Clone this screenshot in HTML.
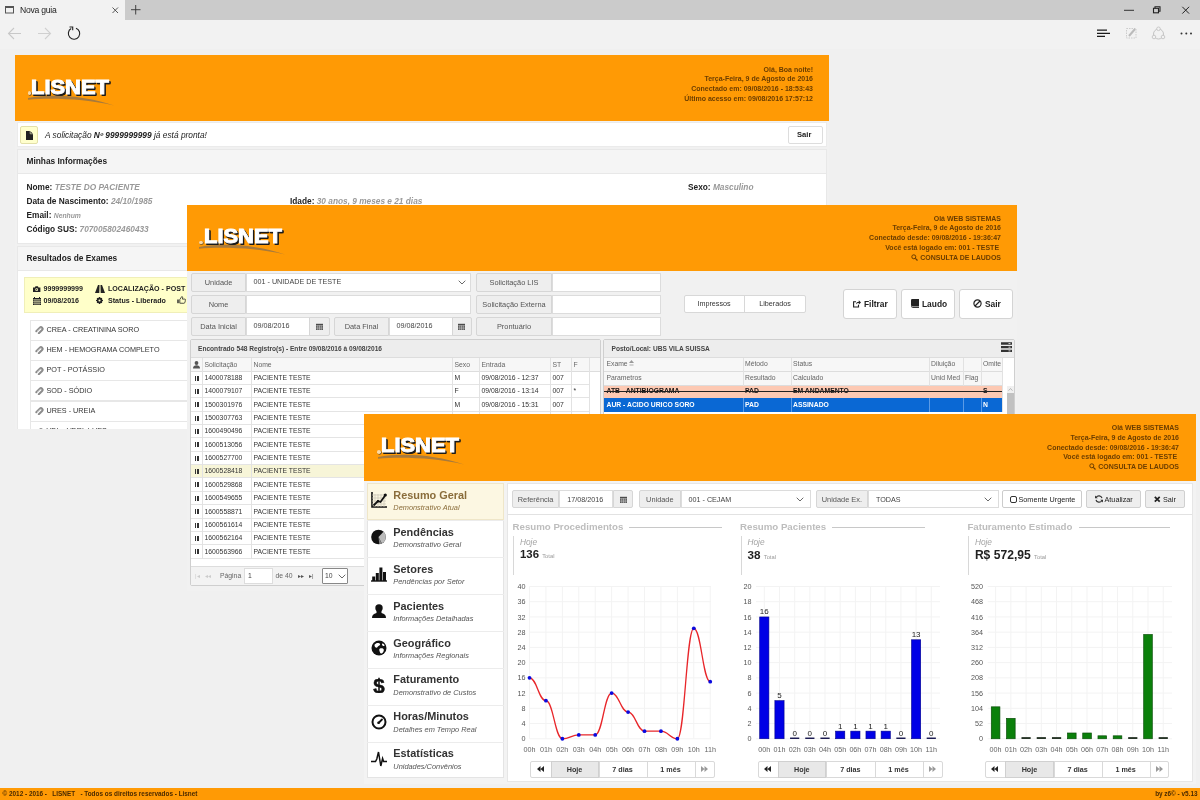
<!DOCTYPE html>
<html><head><meta charset="utf-8">
<style>
*{box-sizing:border-box;margin:0;padding:0}
html,body{width:1200px;height:800px;overflow:hidden}
body{will-change:transform;position:relative;background:#f0f0f0;font-family:"Liberation Sans",sans-serif;color:#333;font-size:8px}
.a{position:absolute}
#s1,#s2,#s3{will-change:transform}
.t{position:absolute;white-space:nowrap;line-height:1}
.b{font-weight:bold}
.i{font-style:italic}
.hdr{position:absolute;left:0;top:0;background:#ff9a05}
.logo{position:absolute;font-weight:bold;color:#fff;font-size:20.400px;line-height:1;white-space:nowrap;-webkit-text-stroke:1px #fff;text-shadow:1.300px 1.300px 0 #1a1a1a,1.800px 1.800px 0 #1a1a1a,.8px 1.600px 0 #1a1a1a,1.600px .8px 0 #1a1a1a;transform:scaleX(1.075);transform-origin:0 0}
.sw{position:absolute}
.hr{position:absolute;text-align:right;white-space:nowrap;font-weight:bold;color:#6b3d00;font-size:7px;line-height:1}
.sh{box-shadow:0 0 2px rgba(0,0,0,.25)}
/* section placeholders */
</style></head><body>
<!-- BROWSER CHROME -->
<div class="a" id="tabbar" style="left:0;top:0;width:1200px;height:20px;background:#cbcbcb"></div>
<div class="a" id="tab" style="left:0;top:0;width:125px;height:20px;background:#f2f2f2"></div>
<div class="a" id="toolbar" style="left:0;top:20px;width:1200px;height:29px;background:#f2f2f2"></div>

<svg class="a" style="left:0;top:0" width="1200" height="49" viewBox="0 0 1200 49" fill="none">
<rect x="5.5" y="6.5" width="8" height="6.5" stroke="#555" stroke-width="1"/><rect x="5" y="6" width="9" height="2" fill="#555"/>
<path d="M112.5 7.5l5.5 5.5M118 7.5l-5.5 5.5" stroke="#444" stroke-width=".9"/>
<path d="M131 9.7h9.5M135.7 5v9.5" stroke="#333" stroke-width=".9"/>
<path d="M21 33.5H9M14 28l-5.5 5.5L14 39" stroke="#c8c8c8" stroke-width="1.1"/>
<path d="M38 33.5h12M45 28l5.500 5.500L45 39" stroke="#d0d0d0" stroke-width="1.1"/>
<path d="M71.200 28.600A5.700 5.700 0 1 0 76 28.200" stroke="#222" stroke-width="1.100"/><path d="M69.500 27h3.200v3.200" stroke="#222" stroke-width="1.100"/>
<path d="M1124 10.300h10" stroke="#333" stroke-width="1"/>
<rect x="1153.500" y="8.300" width="5" height="4.500" stroke="#222" stroke-width="1.100"/><path d="M1155 8.300V6.800h5v4.500h-1.500" stroke="#222" stroke-width="1.100"/>
<path d="M1182.300 6.800l6.800 6.800M1189.100 6.800l-6.800 6.800" stroke="#222" stroke-width="1"/>
<path d="M1097 30.100h10M1097 33.300h13M1097 36.400h8" stroke="#1a1a1a" stroke-width="1.300"/>
<path d="M1126.500 28.500h9.500v9.500h-9.500z" stroke="#ccc" stroke-width="1" stroke-dasharray="1.500 1"/><path d="M1129 36l6-7" stroke="#bbb" stroke-width="2"/>
<circle cx="1158.500" cy="34" r="5" stroke="#c4c4c4" stroke-width="1"/><circle cx="1158.500" cy="28.800" r="1.800" fill="#f2f2f2" stroke="#c4c4c4" stroke-width=".9"/><circle cx="1154" cy="37" r="1.800" fill="#f2f2f2" stroke="#c4c4c4" stroke-width=".9"/><circle cx="1163" cy="37" r="1.800" fill="#f2f2f2" stroke="#c4c4c4" stroke-width=".9"/>
<circle cx="1181.500" cy="33.600" r="1" fill="#333"/><circle cx="1186.300" cy="33.600" r="1" fill="#333"/><circle cx="1191" cy="33.600" r="1" fill="#333"/>
</svg>
<div class="t" style="left:20px;top:5.500px;font-size:8.600px;letter-spacing:-.25px;color:#222">Nova guia</div>

<!-- SCREENSHOT 1 -->
<div class="a" id="s1" style="left:15px;top:55px;width:814px;height:374px;overflow:hidden;background:#f1f1f1">

<div class="hdr" style="width:814px;height:66px"></div>
<div class="logo" style="left:16.200px;top:22.200px">LISNET</div>
<div class="a" style="left:12.500px;top:36px;width:3.500px;height:3.500px;border-radius:50%;background:#ffd9a0;box-shadow:.5px .5px 0 #333"></div>
<svg class="sw" style="left:11px;top:39px" width="100" height="14" viewBox="0 0 100 14"><path d="M2 4C25 -.5 60 1.500 88 11.500C60 5 25 3.700 2 5.800z" fill="#a87a3c"/></svg>
<div class="hr" style="right:16px;top:9.500px;line-height:9.800px">Olá, Boa noite!<br>Terça-Feira, 9 de Agosto de 2016<br>Conectado em: 09/08/2016 - 18:53:43<br>Último acesso em: 09/08/2016 17:57:12</div>
<div class="a" style="left:2px;top:67px;width:810px;height:25px;background:#fff;border:1px solid #ebebeb"></div>
<div class="a" style="left:5px;top:71px;width:18px;height:18px;background:#ffffcc;border:1px solid #e3e0a8;border-radius:2px"></div>
<svg class="a" style="left:10.500px;top:75.500px" width="7" height="9" viewBox="0 0 7 9"><path d="M0 0h4.200L7 2.800V9H0z" fill="#222"/><path d="M4.200 0v2.800H7" fill="none" stroke="#ffffcc" stroke-width=".6"/></svg>
<div class="t i" style="left:30px;top:76.200px;font-size:8.350px;color:#222">A solicitação <b>Nº 9999999999</b> já está pronta!</div>
<div class="a" style="left:773px;top:71px;width:35px;height:18px;background:#fff;border:1px solid #ddd;border-radius:2px"></div>
<div class="t b" style="left:782px;top:76px;font-size:7.600px;color:#222">Sair</div>
<!-- panel 1 -->
<div class="a" style="left:2px;top:94px;width:810px;height:95px;background:#fff;border:1px solid #e8e8e8"></div>
<div class="a" style="left:2px;top:94px;width:810px;height:25px;background:#f5f5f5;border:1px solid #e8e8e8"></div>
<div class="t b" style="left:11.500px;top:102px;font-size:8.330px;color:#222">Minhas Informações</div>
<div class="t b" style="left:11.500px;top:128px;font-size:8.300px;color:#222">Nome: <i style="color:#999">TESTE DO PACIENTE</i></div>
<div class="t b" style="left:11.500px;top:142px;font-size:8.300px;color:#222">Data de Nascimento: <i style="color:#999">24/10/1985</i></div>
<div class="t b" style="left:11.500px;top:156px;font-size:8.300px;color:#222">Email: <i style="color:#999;font-size:6.800px">Nenhum</i></div>
<div class="t b" style="left:11.500px;top:170px;font-size:8.300px;color:#222">Código SUS: <i style="color:#999">707005802460433</i></div>
<div class="t b" style="left:275px;top:142px;font-size:8.300px;color:#222">Idade: <i style="color:#999">30 anos, 9 meses e 21 dias</i></div>
<div class="t b" style="left:673px;top:128px;font-size:8.300px;color:#222">Sexo: <i style="color:#999">Masculino</i></div>
<!-- panel 2 -->
<div class="a" style="left:2px;top:191px;width:810px;height:190px;background:#fff;border:1px solid #e8e8e8"></div>
<div class="a" style="left:2px;top:191px;width:810px;height:25px;background:#f5f5f5;border:1px solid #e8e8e8"></div>
<div class="t b" style="left:11.500px;top:199px;font-size:8.330px;color:#222">Resultados de Exames</div>
<div class="a" style="left:8.500px;top:222px;width:720px;height:35.500px;background:#ffffc9;border:1px solid #f0efb8"></div>
<svg class="a" style="left:18.300px;top:230.500px" width="7.400" height="6.500" viewBox="0 0 8 7"><path d="M0 1.500h2l.7-1.300h2.600L6 1.500h2V7H0z" fill="#222"/><circle cx="4" cy="4" r="1.500" fill="#ffffc9"/><circle cx="4" cy="4" r=".7" fill="#222"/></svg>
<div class="t b" style="left:28.500px;top:230.800px;font-size:7.100px;color:#222">9999999999</div>
<svg class="a" style="left:80px;top:229.500px" width="10" height="8" viewBox="0 0 10 8"><path d="M3 0h1.500L4.300 8H0zM5.500 0H7l3 8H5.700z" fill="#222"/></svg>
<div class="t b" style="left:93px;top:230.800px;font-size:7.100px;color:#222">LOCALIZAÇÃO - POST</div>
<svg class="a" style="left:18px;top:241.500px" width="8" height="8" viewBox="0 0 8 8"><path d="M0 1h8v7H0z" fill="#222"/><path d="M0 2.800h8M0 4.600h8M0 6.300h8M2 2v6M4 2v6M6 2v6" stroke="#ffffc9" stroke-width=".5"/><path d="M1.500 0v1.500M6.500 0v1.500" stroke="#222" stroke-width="1"/></svg>
<div class="t b" style="left:28.500px;top:243.200px;font-size:7.100px;color:#222">09/08/2016</div>
<svg class="a" style="left:81px;top:242px" width="7" height="7" viewBox="0 0 8 8"><circle cx="4" cy="4" r="2.400" fill="none" stroke="#222" stroke-width="1.800"/><path d="M4 0v8M0 4h8M1.200 1.200l5.600 5.600M6.800 1.200L1.200 6.800" stroke="#222" stroke-width="1.300"/><circle cx="4" cy="4" r="1.200" fill="#ffffc9"/></svg>
<div class="t b" style="left:93px;top:243.200px;font-size:7.100px;color:#222">Status - Liberado</div>
<svg class="a" style="left:161.500px;top:241px" width="9" height="8" viewBox="0 0 9 8"><path d="M2.800 7.200V3.500l2-3c1 .2 1 1 .6 2.600h2.400c.8 0 .9.900.5 1.300.4.400.3 1-.2 1.200.2.500 0 .9-.5 1 0 .500-.3.700-.8.700z" fill="none" stroke="#222" stroke-width=".8"/><rect x=".3" y="3.500" width="1.400" height="3.700" fill="#222"/></svg>
<div class="a" style="left:15px;top:264.5px;width:700px;height:21px;border:1px solid #e7e7e7;background:#fff"></div><svg class="a" style="left:20px;top:271.0px" width="9" height="8" viewBox="0 0 9 8"><path d="M1.300 5.200L4.800 1.700a1.600 1.600 0 0 1 2.300 2.300L3.800 7.200" fill="none" stroke="#8c8c8c" stroke-width="2" stroke-linecap="round"/><path d="M2 5.500L5.500 2.200" stroke="#fff" stroke-width=".6" fill="none"/></svg><div class="t" style="left:31.500px;top:270.8px;font-size:7.250px;color:#333">CREA - CREATININA SORO</div><div class="a" style="left:15px;top:284.8px;width:700px;height:21px;border:1px solid #e7e7e7;background:#fff"></div><svg class="a" style="left:20px;top:291.3px" width="9" height="8" viewBox="0 0 9 8"><path d="M1.300 5.200L4.800 1.700a1.600 1.600 0 0 1 2.300 2.300L3.800 7.200" fill="none" stroke="#8c8c8c" stroke-width="2" stroke-linecap="round"/><path d="M2 5.500L5.500 2.200" stroke="#fff" stroke-width=".6" fill="none"/></svg><div class="t" style="left:31.500px;top:291.1px;font-size:7.250px;color:#333">HEM - HEMOGRAMA COMPLETO</div><div class="a" style="left:15px;top:305.1px;width:700px;height:21px;border:1px solid #e7e7e7;background:#fff"></div><svg class="a" style="left:20px;top:311.6px" width="9" height="8" viewBox="0 0 9 8"><path d="M1.300 5.200L4.800 1.700a1.600 1.600 0 0 1 2.300 2.300L3.800 7.200" fill="none" stroke="#8c8c8c" stroke-width="2" stroke-linecap="round"/><path d="M2 5.500L5.500 2.200" stroke="#fff" stroke-width=".6" fill="none"/></svg><div class="t" style="left:31.500px;top:311.4px;font-size:7.250px;color:#333">POT - POTÁSSIO</div><div class="a" style="left:15px;top:325.4px;width:700px;height:21px;border:1px solid #e7e7e7;background:#fff"></div><svg class="a" style="left:20px;top:331.9px" width="9" height="8" viewBox="0 0 9 8"><path d="M1.300 5.200L4.800 1.700a1.600 1.600 0 0 1 2.300 2.300L3.800 7.200" fill="none" stroke="#8c8c8c" stroke-width="2" stroke-linecap="round"/><path d="M2 5.500L5.500 2.200" stroke="#fff" stroke-width=".6" fill="none"/></svg><div class="t" style="left:31.500px;top:331.7px;font-size:7.250px;color:#333">SOD - SÓDIO</div><div class="a" style="left:15px;top:345.7px;width:700px;height:21px;border:1px solid #e7e7e7;background:#fff"></div><svg class="a" style="left:20px;top:352.2px" width="9" height="8" viewBox="0 0 9 8"><path d="M1.300 5.200L4.800 1.700a1.600 1.600 0 0 1 2.300 2.300L3.800 7.200" fill="none" stroke="#8c8c8c" stroke-width="2" stroke-linecap="round"/><path d="M2 5.500L5.500 2.200" stroke="#fff" stroke-width=".6" fill="none"/></svg><div class="t" style="left:31.500px;top:352.0px;font-size:7.250px;color:#333">URES - UREIA</div><div class="a" style="left:15px;top:366.0px;width:700px;height:21px;border:1px solid #e7e7e7;background:#fff"></div><svg class="a" style="left:20px;top:372.5px" width="9" height="8" viewBox="0 0 9 8"><path d="M1.300 5.200L4.800 1.700a1.600 1.600 0 0 1 2.300 2.300L3.800 7.200" fill="none" stroke="#8c8c8c" stroke-width="2" stroke-linecap="round"/><path d="M2 5.500L5.500 2.200" stroke="#fff" stroke-width=".6" fill="none"/></svg><div class="t" style="left:31.500px;top:372.3px;font-size:7.250px;color:#333">VDL - VDRL LUES</div>

</div>
<!-- SCREENSHOT 2 -->
<div class="a" id="s2" style="left:187px;top:205px;width:830px;height:386px;overflow:hidden;background:#f1f1f1">
<div class="hdr" style="width:830px;height:66px"></div><div class="logo" style="left:16.500px;top:21.300px">LISNET</div><div class="a" style="left:12px;top:35.800px;width:3.500px;height:3.500px;border-radius:50%;background:#ffd9a0;box-shadow:.5px .5px 0 #333"></div><svg class="sw" style="left:10px;top:37.800px" width="100" height="14" viewBox="0 0 100 14"><path d="M2 4C25 -.5 60 1.500 88 11.500C60 5 25 3.700 2 5.800z" fill="#a87a3c"/></svg><div class="hr" style="right:16px;top:8.500px;line-height:9.800px">Olá WEB SISTEMAS<br>Terça-Feira, 9 de Agosto de 2016<br>Conectado desde: 09/08/2016 - 19:36:47<br>Você está logado em: 001 - TESTE&nbsp;<br><svg width="7" height="7" viewBox="0 0 7 7" style="vertical-align:-1px"><circle cx="2.800" cy="2.800" r="2" fill="none" stroke="#6b3d00" stroke-width="1"/><path d="M4.300 4.300L6.500 6.500" stroke="#6b3d00" stroke-width="1.200"/></svg> CONSULTA DE LAUDOS</div><div class="a" style="left:4px;top:68px;width:55px;height:18.5px;background:#eee;border:1px solid #d6d6d6;border-radius:2px 0 0 2px"></div><div class="t" style="left:4px;width:55px;text-align:center;top:73.8px;font-size:7.4px;color:#555">Unidade</div><div class="a" style="left:58.5px;top:68px;width:225.5px;height:18.5px;background:#fff;border:1px solid #dcdcdc"></div><div class="t" style="left:66.5px;top:73.4px;font-size:7.2px;color:#444">001 - UNIDADE DE TESTE</div><svg class="a" style="left:271px;top:75px" width="8" height="5" viewBox="0 0 8 5"><path d="M.7.700L4 4l3.300-3.300" fill="none" stroke="#6a6a6a" stroke-width="1"/></svg><div class="a" style="left:4px;top:90px;width:55px;height:18.5px;background:#eee;border:1px solid #d6d6d6;border-radius:2px 0 0 2px"></div><div class="t" style="left:4px;width:55px;text-align:center;top:95.8px;font-size:7.4px;color:#555">Nome</div><div class="a" style="left:58.5px;top:90px;width:225.5px;height:18.5px;background:#fff;border:1px solid #dcdcdc"></div><div class="a" style="left:4px;top:112px;width:55px;height:18.5px;background:#eee;border:1px solid #d6d6d6;border-radius:2px 0 0 2px"></div><div class="t" style="left:4px;width:55px;text-align:center;top:117.8px;font-size:7.4px;color:#555">Data Inicial</div><div class="a" style="left:58.5px;top:112px;width:64px;height:18.5px;background:#fff;border:1px solid #dcdcdc"></div><div class="t" style="left:66.5px;top:117.4px;font-size:7.2px;color:#444">09/08/2016</div><div class="a" style="left:122px;top:112px;width:20.5px;height:18.5px;background:#eee;border:1px solid #d6d6d6;border-radius:0 2px 2px 0"></div><svg class="a" style="left:128.75px;top:117.55px" width="7" height="7.500" viewBox="0 0 7 7.500"><path d="M0 .8h7v6.700H0z" fill="#444"/><path d="M0 2.400h7M0 4.100h7M0 5.800h7M1.750 2.400v5M3.500 2.400v5M5.250 2.400v5" stroke="#eee" stroke-width=".45"/></svg><div class="a" style="left:147px;top:112px;width:55px;height:18.5px;background:#eee;border:1px solid #d6d6d6;border-radius:2px 0 0 2px"></div><div class="t" style="left:147px;width:55px;text-align:center;top:117.8px;font-size:7.4px;color:#555">Data Final</div><div class="a" style="left:201.5px;top:112px;width:64px;height:18.5px;background:#fff;border:1px solid #dcdcdc"></div><div class="t" style="left:209.5px;top:117.4px;font-size:7.2px;color:#444">09/08/2016</div><div class="a" style="left:265px;top:112px;width:19.5px;height:18.5px;background:#eee;border:1px solid #d6d6d6;border-radius:0 2px 2px 0"></div><svg class="a" style="left:271.25px;top:117.55px" width="7" height="7.500" viewBox="0 0 7 7.500"><path d="M0 .8h7v6.700H0z" fill="#444"/><path d="M0 2.400h7M0 4.100h7M0 5.800h7M1.750 2.400v5M3.500 2.400v5M5.250 2.400v5" stroke="#eee" stroke-width=".45"/></svg><div class="a" style="left:289px;top:68px;width:76px;height:18.5px;background:#eee;border:1px solid #d6d6d6;border-radius:2px 0 0 2px"></div><div class="t" style="left:289px;width:76px;text-align:center;top:73.8px;font-size:7.4px;color:#555">Solicitação LIS</div><div class="a" style="left:364.5px;top:68px;width:109px;height:18.5px;background:#fff;border:1px solid #dcdcdc"></div><div class="a" style="left:289px;top:90px;width:76px;height:18.5px;background:#eee;border:1px solid #d6d6d6;border-radius:2px 0 0 2px"></div><div class="t" style="left:289px;width:76px;text-align:center;top:95.8px;font-size:7.4px;color:#555">Solicitação Externa</div><div class="a" style="left:364.5px;top:90px;width:109px;height:18.5px;background:#fff;border:1px solid #dcdcdc"></div><div class="a" style="left:289px;top:112px;width:76px;height:18.5px;background:#eee;border:1px solid #d6d6d6;border-radius:2px 0 0 2px"></div><div class="t" style="left:289px;width:76px;text-align:center;top:117.8px;font-size:7.4px;color:#555">Prontuário</div><div class="a" style="left:364.5px;top:112px;width:109px;height:18.5px;background:#fff;border:1px solid #dcdcdc"></div><div class="a" style="left:497px;top:89.500px;width:121.500px;height:18.500px;background:#fff;border:1px solid #d8d8d8;border-radius:2px"></div><div class="a" style="left:557px;top:89.500px;width:1px;height:18.500px;background:#d8d8d8"></div><div class="t" style="left:497px;width:60px;text-align:center;top:95px;font-size:7.200px;color:#333">Impressos</div><div class="t" style="left:558px;width:60px;text-align:center;top:95px;font-size:7.200px;color:#333">Liberados</div><div class="a" style="left:656px;top:83.500px;width:54px;height:30px;background:#fff;border:1px solid #d4d4d4;border-radius:3px"></div><div class="a" style="left:714px;top:83.500px;width:54px;height:30px;background:#fff;border:1px solid #d4d4d4;border-radius:3px"></div><div class="a" style="left:772px;top:83.500px;width:54px;height:30px;background:#fff;border:1px solid #d4d4d4;border-radius:3px"></div><svg class="a" style="left:666px;top:94.500px" width="8" height="8" viewBox="0 0 8 8"><path d="M5.500 4.800V7H.6V1.800H3" fill="none" stroke="#222" stroke-width="1.100"/><path d="M3 4.500C3 2.500 4.500 1.800 5.800 1.800V.3L8 2.400 5.800 4.500V3.100C4.800 3.100 3.800 3.300 3 4.500z" fill="#222"/></svg><div class="t b" style="left:677px;top:94.500px;font-size:8.400px;color:#222">Filtrar</div><svg class="a" style="left:724px;top:94px" width="8" height="9" viewBox="0 0 8 9"><path d="M1.400 0H8v7.400H1.400C.6 7.400 0 6.900 0 6.100V1.300C0 .5.600 0 1.400 0z" fill="#222"/><path d="M.3 7.200c.2 1 .6 1.300 1.300 1.300H8" fill="none" stroke="#222" stroke-width=".9"/></svg><div class="t b" style="left:735px;top:94.500px;font-size:8.400px;color:#222">Laudo</div><svg class="a" style="left:786px;top:94px" width="9" height="9" viewBox="0 0 9 9"><circle cx="4.500" cy="4.500" r="3.600" fill="none" stroke="#222" stroke-width="1.200"/><path d="M2 7L7 2" stroke="#222" stroke-width="1.200"/></svg><div class="t b" style="left:798px;top:94.500px;font-size:8.400px;color:#222">Sair</div>
<div class="a" style="left:3px;top:133.500px;width:411px;height:247px;background:#fff;border:1px solid #cfcfcf;border-radius:2px"></div><div class="a" style="left:4px;top:134.500px;width:409px;height:18.500px;background:#ededed;border-bottom:1px solid #ddd"></div><div class="t b" style="left:11px;top:140.500px;font-size:6.600px;color:#444">Encontrado 548 Registro(s) - Entre 09/08/2016 à 09/08/2016</div><div class="a" style="left:4px;top:153px;width:409px;height:13.500px;background:#f7f7f7;border-bottom:1px solid #ddd"></div><div class="t" style="left:17.5px;top:156.500px;font-size:6.800px;color:#666">Solicitação</div><div class="t" style="left:66.5px;top:156.500px;font-size:6.800px;color:#666">Nome</div><div class="t" style="left:267.5px;top:156.500px;font-size:6.800px;color:#666">Sexo</div><div class="t" style="left:294.5px;top:156.500px;font-size:6.800px;color:#666">Entrada</div><div class="t" style="left:365.5px;top:156.500px;font-size:6.800px;color:#666">ST</div><div class="t" style="left:386.5px;top:156.500px;font-size:6.800px;color:#666">F</div><svg class="a" style="left:6px;top:156px" width="7" height="7.500" viewBox="0 0 7 7.500"><circle cx="3.500" cy="2" r="1.900" fill="#555"/><path d="M0 7.500C0 5 1.500 4.300 3.500 4.300S7 5 7 7.500z" fill="#555"/></svg><div class="a" style="left:4px;top:166.50px;width:398px;height:13.370px;background:#fff;border-bottom:1px solid #e4e4e4"></div><div class="a" style="left:7.500px;top:170.50px;width:1.600px;height:5px;background:#333"></div><div class="a" style="left:10px;top:170.50px;width:1.600px;height:5px;background:#333"></div><div class="t" style="left:17.500px;top:169.80px;font-size:6.800px;color:#333">1400078188</div><div class="t" style="left:66.500px;top:169.80px;font-size:6.800px;color:#333">PACIENTE TESTE</div><div class="t" style="left:267.500px;top:169.80px;font-size:6.800px;color:#333">M</div><div class="t" style="left:294.500px;top:169.80px;font-size:6.800px;color:#333">09/08/2016 - 12:37</div><div class="t" style="left:365.500px;top:169.80px;font-size:6.800px;color:#333">007</div><div class="t" style="left:386.500px;top:169.80px;font-size:6.800px;color:#333"></div><div class="a" style="left:4px;top:179.87px;width:398px;height:13.370px;background:#fff;border-bottom:1px solid #e4e4e4"></div><div class="a" style="left:7.500px;top:183.87px;width:1.600px;height:5px;background:#333"></div><div class="a" style="left:10px;top:183.87px;width:1.600px;height:5px;background:#333"></div><div class="t" style="left:17.500px;top:183.17px;font-size:6.800px;color:#333">1400079107</div><div class="t" style="left:66.500px;top:183.17px;font-size:6.800px;color:#333">PACIENTE TESTE</div><div class="t" style="left:267.500px;top:183.17px;font-size:6.800px;color:#333">F</div><div class="t" style="left:294.500px;top:183.17px;font-size:6.800px;color:#333">09/08/2016 - 13:14</div><div class="t" style="left:365.500px;top:183.17px;font-size:6.800px;color:#333">007</div><div class="t" style="left:386.500px;top:183.17px;font-size:6.800px;color:#333">*</div><div class="a" style="left:4px;top:193.24px;width:398px;height:13.370px;background:#fff;border-bottom:1px solid #e4e4e4"></div><div class="a" style="left:7.500px;top:197.24px;width:1.600px;height:5px;background:#333"></div><div class="a" style="left:10px;top:197.24px;width:1.600px;height:5px;background:#333"></div><div class="t" style="left:17.500px;top:196.54px;font-size:6.800px;color:#333">1500301976</div><div class="t" style="left:66.500px;top:196.54px;font-size:6.800px;color:#333">PACIENTE TESTE</div><div class="t" style="left:267.500px;top:196.54px;font-size:6.800px;color:#333">M</div><div class="t" style="left:294.500px;top:196.54px;font-size:6.800px;color:#333">09/08/2016 - 15:31</div><div class="t" style="left:365.500px;top:196.54px;font-size:6.800px;color:#333">007</div><div class="t" style="left:386.500px;top:196.54px;font-size:6.800px;color:#333"></div><div class="a" style="left:4px;top:206.61px;width:398px;height:13.370px;background:#fff;border-bottom:1px solid #e4e4e4"></div><div class="a" style="left:7.500px;top:210.61px;width:1.600px;height:5px;background:#333"></div><div class="a" style="left:10px;top:210.61px;width:1.600px;height:5px;background:#333"></div><div class="t" style="left:17.500px;top:209.91px;font-size:6.800px;color:#333">1500307763</div><div class="t" style="left:66.500px;top:209.91px;font-size:6.800px;color:#333">PACIENTE TESTE</div><div class="a" style="left:4px;top:219.98px;width:398px;height:13.370px;background:#fff;border-bottom:1px solid #e4e4e4"></div><div class="a" style="left:7.500px;top:223.98px;width:1.600px;height:5px;background:#333"></div><div class="a" style="left:10px;top:223.98px;width:1.600px;height:5px;background:#333"></div><div class="t" style="left:17.500px;top:223.28px;font-size:6.800px;color:#333">1600490496</div><div class="t" style="left:66.500px;top:223.28px;font-size:6.800px;color:#333">PACIENTE TESTE</div><div class="a" style="left:4px;top:233.35px;width:398px;height:13.370px;background:#fff;border-bottom:1px solid #e4e4e4"></div><div class="a" style="left:7.500px;top:237.35px;width:1.600px;height:5px;background:#333"></div><div class="a" style="left:10px;top:237.35px;width:1.600px;height:5px;background:#333"></div><div class="t" style="left:17.500px;top:236.65px;font-size:6.800px;color:#333">1600513056</div><div class="t" style="left:66.500px;top:236.65px;font-size:6.800px;color:#333">PACIENTE TESTE</div><div class="a" style="left:4px;top:246.72px;width:398px;height:13.370px;background:#fff;border-bottom:1px solid #e4e4e4"></div><div class="a" style="left:7.500px;top:250.72px;width:1.600px;height:5px;background:#333"></div><div class="a" style="left:10px;top:250.72px;width:1.600px;height:5px;background:#333"></div><div class="t" style="left:17.500px;top:250.02px;font-size:6.800px;color:#333">1600527700</div><div class="t" style="left:66.500px;top:250.02px;font-size:6.800px;color:#333">PACIENTE TESTE</div><div class="a" style="left:4px;top:260.09px;width:398px;height:13.370px;background:#f7f5d8;border-bottom:1px solid #e4e4e4"></div><div class="a" style="left:7.500px;top:264.09px;width:1.600px;height:5px;background:#333"></div><div class="a" style="left:10px;top:264.09px;width:1.600px;height:5px;background:#333"></div><div class="t" style="left:17.500px;top:263.39px;font-size:6.800px;color:#333">1600528418</div><div class="t" style="left:66.500px;top:263.39px;font-size:6.800px;color:#333">PACIENTE TESTE</div><div class="a" style="left:4px;top:273.46px;width:398px;height:13.370px;background:#fff;border-bottom:1px solid #e4e4e4"></div><div class="a" style="left:7.500px;top:277.46px;width:1.600px;height:5px;background:#333"></div><div class="a" style="left:10px;top:277.46px;width:1.600px;height:5px;background:#333"></div><div class="t" style="left:17.500px;top:276.76px;font-size:6.800px;color:#333">1600529868</div><div class="t" style="left:66.500px;top:276.76px;font-size:6.800px;color:#333">PACIENTE TESTE</div><div class="a" style="left:4px;top:286.83px;width:398px;height:13.370px;background:#fff;border-bottom:1px solid #e4e4e4"></div><div class="a" style="left:7.500px;top:290.83px;width:1.600px;height:5px;background:#333"></div><div class="a" style="left:10px;top:290.83px;width:1.600px;height:5px;background:#333"></div><div class="t" style="left:17.500px;top:290.13px;font-size:6.800px;color:#333">1600549655</div><div class="t" style="left:66.500px;top:290.13px;font-size:6.800px;color:#333">PACIENTE TESTE</div><div class="a" style="left:4px;top:300.20px;width:398px;height:13.370px;background:#fff;border-bottom:1px solid #e4e4e4"></div><div class="a" style="left:7.500px;top:304.20px;width:1.600px;height:5px;background:#333"></div><div class="a" style="left:10px;top:304.20px;width:1.600px;height:5px;background:#333"></div><div class="t" style="left:17.500px;top:303.50px;font-size:6.800px;color:#333">1600558871</div><div class="t" style="left:66.500px;top:303.50px;font-size:6.800px;color:#333">PACIENTE TESTE</div><div class="a" style="left:4px;top:313.57px;width:398px;height:13.370px;background:#fff;border-bottom:1px solid #e4e4e4"></div><div class="a" style="left:7.500px;top:317.57px;width:1.600px;height:5px;background:#333"></div><div class="a" style="left:10px;top:317.57px;width:1.600px;height:5px;background:#333"></div><div class="t" style="left:17.500px;top:316.87px;font-size:6.800px;color:#333">1600561614</div><div class="t" style="left:66.500px;top:316.87px;font-size:6.800px;color:#333">PACIENTE TESTE</div><div class="a" style="left:4px;top:326.94px;width:398px;height:13.370px;background:#fff;border-bottom:1px solid #e4e4e4"></div><div class="a" style="left:7.500px;top:330.94px;width:1.600px;height:5px;background:#333"></div><div class="a" style="left:10px;top:330.94px;width:1.600px;height:5px;background:#333"></div><div class="t" style="left:17.500px;top:330.24px;font-size:6.800px;color:#333">1600562164</div><div class="t" style="left:66.500px;top:330.24px;font-size:6.800px;color:#333">PACIENTE TESTE</div><div class="a" style="left:4px;top:340.31px;width:398px;height:13.370px;background:#fff;border-bottom:1px solid #e4e4e4"></div><div class="a" style="left:7.500px;top:344.31px;width:1.600px;height:5px;background:#333"></div><div class="a" style="left:10px;top:344.31px;width:1.600px;height:5px;background:#333"></div><div class="t" style="left:17.500px;top:343.61px;font-size:6.800px;color:#333">1600563966</div><div class="t" style="left:66.500px;top:343.61px;font-size:6.800px;color:#333">PACIENTE TESTE</div><div class="a" style="left:15px;top:153px;width:1px;height:200.7px;background:#e2e2e2"></div><div class="a" style="left:64px;top:153px;width:1px;height:200.7px;background:#e2e2e2"></div><div class="a" style="left:265px;top:153px;width:1px;height:200.7px;background:#e2e2e2"></div><div class="a" style="left:292px;top:153px;width:1px;height:200.7px;background:#e2e2e2"></div><div class="a" style="left:363px;top:153px;width:1px;height:200.7px;background:#e2e2e2"></div><div class="a" style="left:384px;top:153px;width:1px;height:200.7px;background:#e2e2e2"></div><div class="a" style="left:402px;top:153px;width:1px;height:200.7px;background:#e2e2e2"></div><div class="a" style="left:4px;top:361px;width:409px;height:19px;background:#f3f3f3;border-top:1px solid #ddd"></div><div class="t" style="left:8px;top:368.200px;font-size:6px;color:#ccc">|◂&nbsp;&nbsp;&nbsp;◂◂</div><div class="t" style="left:33px;top:367.800px;font-size:6.800px;color:#666">Página</div><div class="a" style="left:57px;top:362.500px;width:29px;height:16px;background:#fff;border:1px solid #ddd"></div><div class="t" style="left:61px;top:367.800px;font-size:6.800px;color:#444">1</div><div class="t" style="left:88.500px;top:367.800px;font-size:6.800px;color:#666">de 40</div><div class="t" style="left:111px;top:368.200px;font-size:6px;color:#555">▸▸&nbsp;&nbsp;&nbsp;▸|</div><div class="a" style="left:134.500px;top:362.500px;width:26px;height:16px;background:#fff;border:1px solid #888;border-radius:1px"></div><div class="t" style="left:138px;top:367.800px;font-size:6.800px;color:#444">10</div><svg class="a" style="left:150.5px;top:368.5px" width="8" height="5" viewBox="0 0 8 5"><path d="M.7.700L4 4l3.300-3.300" fill="none" stroke="#6a6a6a" stroke-width="1"/></svg><div class="a" style="left:416px;top:133.500px;width:412px;height:260px;background:#fff;border:1px solid #cfcfcf;border-radius:2px"></div><div class="a" style="left:417px;top:134.500px;width:410px;height:18.500px;background:#ededed;border-bottom:1px solid #ddd"></div><div class="t b" style="left:424.500px;top:140.500px;font-size:6.600px;color:#444">Posto/Local: UBS VILA SUISSA</div><svg class="a" style="left:813.500px;top:136.500px" width="11" height="11" viewBox="0 0 11 11"><path d="M0 1.500h11M0 5.200h11M0 8.900h11" stroke="#333" stroke-width="2.300"/><path d="M7.500 1.500h2M7.500 5.200h2M7.500 8.900h2" stroke="#ededed" stroke-width=".8"/></svg><div class="a" style="left:417px;top:153px;width:398px;height:27.500px;background:#f7f7f7"></div><div class="a" style="left:417px;top:166px;width:398px;height:1px;background:#ddd"></div><div class="a" style="left:417px;top:179.500px;width:398px;height:1px;background:#ddd"></div><div class="t" style="left:419.5px;top:156px;font-size:6.800px;color:#666">Exame</div><div class="t" style="left:419.5px;top:170px;font-size:6.800px;color:#666">Parametros</div><div class="a" style="left:555.5px;top:153px;width:1px;height:54px;background:#e2e2e2"></div><div class="t" style="left:558.0px;top:156px;font-size:6.800px;color:#666">Método</div><div class="t" style="left:558.0px;top:170px;font-size:6.800px;color:#666">Resultado</div><div class="a" style="left:603.5px;top:153px;width:1px;height:54px;background:#e2e2e2"></div><div class="t" style="left:606.0px;top:156px;font-size:6.800px;color:#666">Status</div><div class="t" style="left:606.0px;top:170px;font-size:6.800px;color:#666">Calculado</div><div class="a" style="left:741.5px;top:153px;width:1px;height:54px;background:#e2e2e2"></div><div class="t" style="left:744.0px;top:156px;font-size:6.800px;color:#666">Diluição</div><div class="t" style="left:744.0px;top:170px;font-size:6.800px;color:#666">Unid Med</div><div class="a" style="left:775.5px;top:153px;width:1px;height:54px;background:#e2e2e2"></div><div class="t" style="left:778.0px;top:170px;font-size:6.800px;color:#666">Flag</div><div class="a" style="left:793.5px;top:153px;width:1px;height:54px;background:#e2e2e2"></div><div class="t" style="left:796.0px;top:156px;font-size:6.800px;color:#666">Omite</div><svg class="a" style="left:441.500px;top:155px" width="5" height="6" viewBox="0 0 5 6"><path d="M2.500 0L5 3H0z" fill="#999"/><path d="M.5 5h4" stroke="#999" stroke-width=".8"/></svg><div class="a" style="left:815px;top:153px;width:1px;height:54px;background:#e2e2e2"></div><div class="a" style="left:417px;top:180.500px;width:398px;height:12.500px;background:#fdc9b3"></div><div class="t b" style="left:419.5px;top:183px;font-size:6.800px;color:#111">ATB - ANTIBIOGRAMA</div><div class="t b" style="left:558px;top:183px;font-size:6.800px;color:#111">PAD</div><div class="t b" style="left:606px;top:183px;font-size:6.800px;color:#111">EM ANDAMENTO</div><div class="t b" style="left:796px;top:183px;font-size:6.800px;color:#111">S</div><div class="a" style="left:417px;top:186.200px;width:398px;height:1px;background:#222"></div><div class="a" style="left:417px;top:193px;width:398px;height:13.500px;background:#0a68d4"></div><div class="t b" style="left:419.5px;top:196.500px;font-size:6.800px;color:#fff">AUR - ACIDO URICO SORO</div><div class="t b" style="left:558px;top:196.500px;font-size:6.800px;color:#fff">PAD</div><div class="t b" style="left:606px;top:196.500px;font-size:6.800px;color:#fff">ASSINADO</div><div class="t b" style="left:796px;top:196.500px;font-size:6.800px;color:#fff">N</div><div class="a" style="left:555.5px;top:193px;width:1px;height:13.500px;background:#5b9be6"></div><div class="a" style="left:603.5px;top:193px;width:1px;height:13.500px;background:#5b9be6"></div><div class="a" style="left:741.5px;top:193px;width:1px;height:13.500px;background:#5b9be6"></div><div class="a" style="left:775.5px;top:193px;width:1px;height:13.500px;background:#5b9be6"></div><div class="a" style="left:793.5px;top:193px;width:1px;height:13.500px;background:#5b9be6"></div><div class="a" style="left:819.500px;top:180.500px;width:7.500px;height:212px;background:#f0f0f0"></div><div class="a" style="left:820px;top:188px;width:7px;height:60px;background:#c1c1c1"></div><svg class="a" style="left:821px;top:182.500px" width="5" height="3" viewBox="0 0 5 3"><path d="M.5 2.700L2.500.5l2 2.200" fill="none" stroke="#aaa" stroke-width=".8"/></svg>
</div>
<!-- SCREENSHOT 3 -->
<div class="a" id="s3" style="left:364px;top:413px;width:831.500px;height:371px;overflow:hidden"><div class="a" style="left:0;top:1px;width:832px;height:370px;background:#f3f3f3"></div>
<div class="hdr" style="top:1px;width:832px;height:66.500px"></div><div class="logo" style="left:17.200px;top:21.900px">LISNET</div><div class="a" style="left:13px;top:37.300px;width:3.500px;height:3.500px;border-radius:50%;background:#ffd9a0;box-shadow:.5px .5px 0 #333"></div><svg class="sw" style="left:11.500px;top:40.300px" width="100" height="14" viewBox="0 0 100 14"><path d="M2 4C25 -.5 60 1.500 88 11.500C60 5 25 3.700 2 5.800z" fill="#a87a3c"/></svg><div class="hr" style="right:16.500px;top:10.100px;line-height:9.800px">Olá WEB SISTEMAS<br>Terça-Feira, 9 de Agosto de 2016<br>Conectado desde: 09/08/2016 - 19:36:47<br>Você está logado em: 001 - TESTE&nbsp;<br><svg width="7" height="7" viewBox="0 0 7 7" style="vertical-align:-1px"><circle cx="2.800" cy="2.800" r="2" fill="none" stroke="#6b3d00" stroke-width="1"/><path d="M4.300 4.300L6.500 6.500" stroke="#6b3d00" stroke-width="1.200"/></svg> CONSULTA DE LAUDOS</div><div class="a" style="left:2.5px;top:69.9px;width:137.5px;height:295.6px;background:#fff;border:1px solid #e4e4e4"></div><div class="a" style="left:2.5px;top:69.9px;width:137.5px;height:37.0px;background:#fcf7e2;border:1px solid #efe6c8"></div><svg class="a" style="left:7.3px;top:79.10px" width="16" height="16" viewBox="0 0 16 16"><path d="M1 0v15h15" fill="none" stroke="#111" stroke-width="1.600"/><path d="M4 2v13M7 2v13M10 2v13M13 2v13M1 3h14M1 6h14M1 9h14M1 12h14" stroke="#c9c3b4" stroke-width=".7"/><path d="M2.500 13.500L7 9l2.500 1L14.500 3" fill="none" stroke="#111" stroke-width="1.800"/><circle cx="14.300" cy="3" r="1.600" fill="#111"/><circle cx="7" cy="9.300" r="1.200" fill="#111"/></svg><div class="t b" style="left:29.3px;top:76.70px;font-size:10.900px;color:#8a6d3b">Resumo Geral</div><div class="t i" style="left:29.3px;top:91.20px;font-size:7.400px;color:#8a6d3b">Demonstrativo Atual</div><div class="a" style="left:2.5px;top:106.85px;width:137.5px;height:1px;background:#ececec"></div><svg class="a" style="left:7.3px;top:116.05px" width="16" height="16" viewBox="0 0 16 16"><circle cx="7.500" cy="8" r="7.300" fill="#111"/><path d="M7.500 8L12.500 2.700A7.300 7.300 0 0 1 10.800 14.500z" fill="#bbb"/><path d="M7.500 8l3.300 6.500A7.300 7.300 0 0 1 8.300 15.300z" fill="#888"/></svg><div class="t b" style="left:29.3px;top:113.65px;font-size:10.900px;color:#333">Pendências</div><div class="t i" style="left:29.3px;top:128.15px;font-size:7.400px;color:#555">Demonstrativo Geral</div><div class="a" style="left:2.5px;top:143.80px;width:137.5px;height:1px;background:#ececec"></div><svg class="a" style="left:7.3px;top:153.00px" width="16" height="16" viewBox="0 0 16 16"><path d="M0 15h16" stroke="#111" stroke-width="1.400"/><rect x="1.200" y="10.500" width="3" height="4.500" fill="#111"/><rect x="4.800" y="7" width="3" height="8" fill="#111"/><rect x="8.400" y="1.500" width="3" height="13.500" fill="#111"/><rect x="12" y="6" width="3" height="9" fill="#111"/></svg><div class="t b" style="left:29.3px;top:150.60px;font-size:10.900px;color:#333">Setores</div><div class="t i" style="left:29.3px;top:165.10px;font-size:7.400px;color:#555">Pendências por Setor</div><div class="a" style="left:2.5px;top:180.75px;width:137.5px;height:1px;background:#ececec"></div><svg class="a" style="left:7.3px;top:189.95px" width="16" height="16" viewBox="0 0 16 16"><circle cx="8" cy="5" r="3.700" fill="#111"/><path d="M5.500 7.500h5v2.500c3 .8 4.500 2 4.500 5H1c0-3 1.500-4.200 4.500-5z" fill="#111"/></svg><div class="t b" style="left:29.3px;top:187.55px;font-size:10.900px;color:#333">Pacientes</div><div class="t i" style="left:29.3px;top:202.05px;font-size:7.400px;color:#555">Informações Detalhadas</div><div class="a" style="left:2.5px;top:217.70px;width:137.5px;height:1px;background:#ececec"></div><svg class="a" style="left:7.3px;top:226.90px" width="16" height="16" viewBox="0 0 16 16"><circle cx="8" cy="8" r="7.500" fill="#111"/><path d="M5 3.500c1.500-.8 3.500-.5 4 .5s-.5 1.500-1.500 2-1 1.800-2 1.800S3.500 6.500 3.500 5.500 4 4 5 3.500zM9 8.500c1.500-.5 3.500 0 3.800 1.200s-1 3.300-2.300 3.800S8.800 12 8.500 11 8 9 9 8.500zM11.500 3.500c1 0 2 1 2 2s-1.500.5-2 0-.8-2 0-2z" fill="#fff"/></svg><div class="t b" style="left:29.3px;top:224.50px;font-size:10.900px;color:#333">Geográfico</div><div class="t i" style="left:29.3px;top:239.00px;font-size:7.400px;color:#555">Informações Regionais</div><div class="a" style="left:2.5px;top:254.65px;width:137.5px;height:1px;background:#ececec"></div><svg class="a" style="left:7.3px;top:263.85px" width="16" height="16" viewBox="0 0 16 16"><text x="8" y="15.500" text-anchor="middle" font-family="Liberation Sans" font-weight="bold" font-size="20.500" fill="#111" stroke="#111" stroke-width=".5">$</text></svg><div class="t b" style="left:29.3px;top:261.45px;font-size:10.900px;color:#333">Faturamento</div><div class="t i" style="left:29.3px;top:275.95px;font-size:7.400px;color:#555">Demonstrativo de Custos</div><div class="a" style="left:2.5px;top:291.60px;width:137.5px;height:1px;background:#ececec"></div><svg class="a" style="left:7.3px;top:300.80px" width="16" height="16" viewBox="0 0 16 16"><circle cx="8" cy="8" r="6.500" fill="none" stroke="#111" stroke-width="2"/><path d="M7.500 9L11 5.500" stroke="#111" stroke-width="1.800" stroke-linecap="round"/><circle cx="7.600" cy="8.800" r="1.300" fill="#111"/></svg><div class="t b" style="left:29.3px;top:298.40px;font-size:10.900px;color:#333">Horas/Minutos</div><div class="t i" style="left:29.3px;top:312.90px;font-size:7.400px;color:#555">Detalhes em Tempo Real</div><div class="a" style="left:2.5px;top:328.55px;width:137.5px;height:1px;background:#ececec"></div><svg class="a" style="left:7.3px;top:337.75px" width="16" height="16" viewBox="0 0 16 16"><path d="M0 10.500h4.500l1.300-2.500 1.700-7 2.300 14 1.800-7.500 1 3H16" fill="none" stroke="#111" stroke-width="1.500" stroke-linejoin="miter"/></svg><div class="t b" style="left:29.3px;top:335.35px;font-size:10.900px;color:#333">Estatísticas</div><div class="t i" style="left:29.3px;top:349.85px;font-size:7.400px;color:#555">Unidades/Convênios</div><div class="a" style="left:142.7px;top:69.9px;width:686.0px;height:299.6px;background:#fff;border:1px solid #e6e6e6"></div><div class="a" style="left:147.7px;top:77.4px;width:47.8px;height:18px;background:#eee;border:1px solid #d6d6d6;border-radius:2px 0 0 2px"></div><div class="t" style="left:147.7px;width:47.8px;text-align:center;top:83.0px;font-size:7.4px;color:#555">Referência</div><div class="a" style="left:195.2px;top:77.4px;width:54.3px;height:18px;background:#fff;border:1px solid #dcdcdc"></div><div class="t" style="left:203.2px;top:82.5px;font-size:7.2px;color:#444">17/08/2016</div><div class="a" style="left:249.2px;top:77.4px;width:20.3px;height:18px;background:#eee;border:1px solid #d6d6d6;border-radius:0 2px 2px 0"></div><svg class="a" style="left:255.84999999999997px;top:82.7px" width="7" height="7.500" viewBox="0 0 7 7.500"><path d="M0 .8h7v6.700H0z" fill="#444"/><path d="M0 2.400h7M0 4.100h7M0 5.800h7M1.750 2.400v5M3.500 2.400v5M5.250 2.400v5" stroke="#eee" stroke-width=".45"/></svg><div class="a" style="left:274.7px;top:77.4px;width:42.3px;height:18px;background:#eee;border:1px solid #d6d6d6;border-radius:2px 0 0 2px"></div><div class="t" style="left:274.7px;width:42.3px;text-align:center;top:83.0px;font-size:7.4px;color:#555">Unidade</div><div class="a" style="left:316.5px;top:77.4px;width:130.8px;height:18px;background:#fff;border:1px solid #dcdcdc"></div><div class="t" style="left:324.5px;top:82.5px;font-size:7.2px;color:#444">001 - CEJAM</div><svg class="a" style="left:431.5px;top:84.4px" width="8" height="5" viewBox="0 0 8 5"><path d="M.7.700L4 4l3.300-3.300" fill="none" stroke="#6a6a6a" stroke-width="1"/></svg><div class="a" style="left:451.5px;top:77.4px;width:52.8px;height:18px;background:#eee;border:1px solid #d6d6d6;border-radius:2px 0 0 2px"></div><div class="t" style="left:451.5px;width:52.8px;text-align:center;top:83.0px;font-size:7.4px;color:#555">Unidade Ex.</div><div class="a" style="left:504px;top:77.4px;width:130.5px;height:18px;background:#fff;border:1px solid #dcdcdc"></div><div class="t" style="left:512px;top:82.5px;font-size:7.2px;color:#444">TODAS</div><svg class="a" style="left:619.5px;top:84.4px" width="8" height="5" viewBox="0 0 8 5"><path d="M.7.700L4 4l3.300-3.300" fill="none" stroke="#6a6a6a" stroke-width="1"/></svg><div class="a" style="left:638.3px;top:77.4px;width:80px;height:18px;background:#fff;border:1px solid #ccc;border-radius:2px"></div><div class="a" style="left:645.600px;top:82.900px;width:7px;height:7px;border:1.200px solid #333;border-radius:2px"></div><div class="t" style="left:654.5px;top:82.80000000000001px;font-size:7.250px;color:#222">Somente Urgente</div><div class="a" style="left:722.4px;top:77.4px;width:54.500px;height:18px;background:#eee;border:1px solid #d0d0d0;border-radius:2px"></div><svg class="a" style="left:730.5px;top:82.4px" width="8" height="8" viewBox="0 0 8 8"><path d="M7 3.200A3.200 3.200 0 0 0 1.200 2.300M1 4.800A3.200 3.200 0 0 0 6.800 5.700" fill="none" stroke="#333" stroke-width="1.200"/><path d="M0 .5v2.800h2.800zM8 7.500V4.700H5.200z" fill="#333"/></svg><div class="t" style="left:740.5px;top:82.80000000000001px;font-size:7.250px;color:#222">Atualizar</div><div class="a" style="left:781px;top:77.4px;width:40px;height:18px;background:#eee;border:1px solid #d0d0d0;border-radius:2px"></div><svg class="a" style="left:790px;top:83.2px" width="6.500" height="6.500" viewBox="0 0 6.500 6.500"><path d="M.8.800l4.900 4.900M5.700.800L.8 5.700" stroke="#222" stroke-width="1.700"/></svg><div class="t" style="left:799px;top:82.80000000000001px;font-size:7.250px;color:#222">Sair</div><div class="a" style="left:143.7px;top:101.3px;width:684px;height:1px;background:#e2e2e2"></div>
<div class="t b" style="left:148.5px;top:109.3px;font-size:9.700px;color:#bdbdbd">Resumo Procedimentos</div><div class="a" style="left:265px;top:113.5px;width:93px;height:1.600px;background:#c8c8c8"></div><div class="a" style="left:149.3px;top:122.8px;width:1px;height:39.500px;background:#d8d8d8"></div><div class="t i" style="left:156.0px;top:125.2px;font-size:8.300px;color:#a5a5a5">Hoje</div><div class="t b" style="left:156.0px;top:135.6px;font-size:11.400px;color:#222">136 <span style="font-weight:normal;font-size:5.800px;color:#999">Total</span></div><div class="t b" style="left:376px;top:109.3px;font-size:9.700px;color:#bdbdbd">Resumo Pacientes</div><div class="a" style="left:467.5px;top:113.5px;width:93.0px;height:1.600px;background:#c8c8c8"></div><div class="a" style="left:376.8px;top:122.8px;width:1px;height:39.500px;background:#d8d8d8"></div><div class="t i" style="left:383.5px;top:125.2px;font-size:8.300px;color:#a5a5a5">Hoje</div><div class="t b" style="left:383.5px;top:135.6px;font-size:11.700px;color:#222">38 <span style="font-weight:normal;font-size:5.800px;color:#999">Total</span></div><div class="t b" style="left:603.4px;top:109.3px;font-size:9.700px;color:#bdbdbd">Faturamento Estimado</div><div class="a" style="left:715px;top:113.5px;width:91px;height:1.600px;background:#c8c8c8"></div><div class="a" style="left:604.2px;top:122.8px;width:1px;height:39.500px;background:#d8d8d8"></div><div class="t i" style="left:610.9px;top:125.2px;font-size:8.300px;color:#a5a5a5">Hoje</div><div class="t b" style="left:610.9px;top:135.6px;font-size:12.100px;color:#222">R$ 572,95 <span style="font-weight:normal;font-size:5.800px;color:#999">Total</span></div><svg class="a" style="left:0;top:0" width="832" height="371" viewBox="364 413 832 371" font-family="Liberation Sans" font-size="7.200"><path d="M529.5 738.75H711" stroke="#f3f3f3" stroke-width="1"/><path d="M529.5 723.52H711" stroke="#f3f3f3" stroke-width="1"/><path d="M529.5 708.30H711" stroke="#f3f3f3" stroke-width="1"/><path d="M529.5 693.08H711" stroke="#f3f3f3" stroke-width="1"/><path d="M529.5 677.85H711" stroke="#f3f3f3" stroke-width="1"/><path d="M529.5 662.62H711" stroke="#f3f3f3" stroke-width="1"/><path d="M529.5 647.40H711" stroke="#f3f3f3" stroke-width="1"/><path d="M529.5 632.17H711" stroke="#f3f3f3" stroke-width="1"/><path d="M529.5 616.95H711" stroke="#f3f3f3" stroke-width="1"/><path d="M529.5 601.73H711" stroke="#f3f3f3" stroke-width="1"/><path d="M529.5 586.50H711" stroke="#f3f3f3" stroke-width="1"/><path d="M529.50 586.5V738.75" stroke="#f3f3f3" stroke-width="1"/><path d="M545.93 586.5V738.75" stroke="#f3f3f3" stroke-width="1"/><path d="M562.36 586.5V738.75" stroke="#f3f3f3" stroke-width="1"/><path d="M578.79 586.5V738.75" stroke="#f3f3f3" stroke-width="1"/><path d="M595.22 586.5V738.75" stroke="#f3f3f3" stroke-width="1"/><path d="M611.65 586.5V738.75" stroke="#f3f3f3" stroke-width="1"/><path d="M628.08 586.5V738.75" stroke="#f3f3f3" stroke-width="1"/><path d="M644.51 586.5V738.75" stroke="#f3f3f3" stroke-width="1"/><path d="M660.94 586.5V738.75" stroke="#f3f3f3" stroke-width="1"/><path d="M677.37 586.5V738.75" stroke="#f3f3f3" stroke-width="1"/><path d="M693.80 586.5V738.75" stroke="#f3f3f3" stroke-width="1"/><path d="M710.23 586.5V738.75" stroke="#f3f3f3" stroke-width="1"/><text x="525.5" y="741.35" text-anchor="end" fill="#555">0</text><text x="525.5" y="726.12" text-anchor="end" fill="#555">4</text><text x="525.5" y="710.90" text-anchor="end" fill="#555">8</text><text x="525.5" y="695.68" text-anchor="end" fill="#555">12</text><text x="525.5" y="680.45" text-anchor="end" fill="#555">16</text><text x="525.5" y="665.23" text-anchor="end" fill="#555">20</text><text x="525.5" y="650.00" text-anchor="end" fill="#555">24</text><text x="525.5" y="634.77" text-anchor="end" fill="#555">28</text><text x="525.5" y="619.55" text-anchor="end" fill="#555">32</text><text x="525.5" y="604.33" text-anchor="end" fill="#555">36</text><text x="525.5" y="589.10" text-anchor="end" fill="#555">40</text><text x="529.50" y="751.500" text-anchor="middle" fill="#666">00h</text><text x="545.93" y="751.500" text-anchor="middle" fill="#666">01h</text><text x="562.36" y="751.500" text-anchor="middle" fill="#666">02h</text><text x="578.79" y="751.500" text-anchor="middle" fill="#666">03h</text><text x="595.22" y="751.500" text-anchor="middle" fill="#666">04h</text><text x="611.65" y="751.500" text-anchor="middle" fill="#666">05h</text><text x="628.08" y="751.500" text-anchor="middle" fill="#666">06h</text><text x="644.51" y="751.500" text-anchor="middle" fill="#666">07h</text><text x="660.94" y="751.500" text-anchor="middle" fill="#666">08h</text><text x="677.37" y="751.500" text-anchor="middle" fill="#666">09h</text><text x="693.80" y="751.500" text-anchor="middle" fill="#666">10h</text><text x="710.23" y="751.500" text-anchor="middle" fill="#666">11h</text><path d="M529.50 677.85C536.89 677.85 538.54 700.69 545.93 700.69C553.32 700.69 554.97 738.75 562.36 738.75C569.75 738.75 571.40 734.94 578.79 734.94C586.18 734.94 587.83 734.94 595.22 734.94C602.61 734.94 604.26 693.08 611.65 693.08C619.04 693.08 620.69 712.11 628.08 712.11C635.47 712.11 637.12 731.14 644.51 731.14C651.90 731.14 653.55 731.14 660.94 731.14C668.33 731.14 669.98 738.75 677.37 738.75C684.76 738.75 686.41 628.37 693.80 628.37C701.19 628.37 702.84 681.66 710.23 681.66" fill="none" stroke="#e8262a" stroke-width="1.300"/><circle cx="529.50" cy="677.85" r="1.900" fill="#0a0adf"/><circle cx="545.93" cy="700.69" r="1.900" fill="#0a0adf"/><circle cx="562.36" cy="738.75" r="1.900" fill="#0a0adf"/><circle cx="578.79" cy="734.94" r="1.900" fill="#0a0adf"/><circle cx="595.22" cy="734.94" r="1.900" fill="#0a0adf"/><circle cx="611.65" cy="693.08" r="1.900" fill="#0a0adf"/><circle cx="628.08" cy="712.11" r="1.900" fill="#0a0adf"/><circle cx="644.51" cy="731.14" r="1.900" fill="#0a0adf"/><circle cx="660.94" cy="731.14" r="1.900" fill="#0a0adf"/><circle cx="677.37" cy="738.75" r="1.900" fill="#0a0adf"/><circle cx="693.80" cy="628.37" r="1.900" fill="#0a0adf"/><circle cx="710.23" cy="681.66" r="1.900" fill="#0a0adf"/><path d="M756 738.75H940" stroke="#f3f3f3" stroke-width="1"/><path d="M756 723.52H940" stroke="#f3f3f3" stroke-width="1"/><path d="M756 708.30H940" stroke="#f3f3f3" stroke-width="1"/><path d="M756 693.08H940" stroke="#f3f3f3" stroke-width="1"/><path d="M756 677.85H940" stroke="#f3f3f3" stroke-width="1"/><path d="M756 662.62H940" stroke="#f3f3f3" stroke-width="1"/><path d="M756 647.40H940" stroke="#f3f3f3" stroke-width="1"/><path d="M756 632.17H940" stroke="#f3f3f3" stroke-width="1"/><path d="M756 616.95H940" stroke="#f3f3f3" stroke-width="1"/><path d="M756 601.73H940" stroke="#f3f3f3" stroke-width="1"/><path d="M756 586.50H940" stroke="#f3f3f3" stroke-width="1"/><path d="M764.30 586.5V738.75" stroke="#f3f3f3" stroke-width="1"/><path d="M779.48 586.5V738.75" stroke="#f3f3f3" stroke-width="1"/><path d="M794.66 586.5V738.75" stroke="#f3f3f3" stroke-width="1"/><path d="M809.84 586.5V738.75" stroke="#f3f3f3" stroke-width="1"/><path d="M825.02 586.5V738.75" stroke="#f3f3f3" stroke-width="1"/><path d="M840.20 586.5V738.75" stroke="#f3f3f3" stroke-width="1"/><path d="M855.38 586.5V738.75" stroke="#f3f3f3" stroke-width="1"/><path d="M870.56 586.5V738.75" stroke="#f3f3f3" stroke-width="1"/><path d="M885.74 586.5V738.75" stroke="#f3f3f3" stroke-width="1"/><path d="M900.92 586.5V738.75" stroke="#f3f3f3" stroke-width="1"/><path d="M916.10 586.5V738.75" stroke="#f3f3f3" stroke-width="1"/><path d="M931.28 586.5V738.75" stroke="#f3f3f3" stroke-width="1"/><text x="751.5" y="741.35" text-anchor="end" fill="#555">0</text><text x="751.5" y="726.12" text-anchor="end" fill="#555">2</text><text x="751.5" y="710.90" text-anchor="end" fill="#555">4</text><text x="751.5" y="695.68" text-anchor="end" fill="#555">6</text><text x="751.5" y="680.45" text-anchor="end" fill="#555">8</text><text x="751.5" y="665.23" text-anchor="end" fill="#555">10</text><text x="751.5" y="650.00" text-anchor="end" fill="#555">12</text><text x="751.5" y="634.77" text-anchor="end" fill="#555">14</text><text x="751.5" y="619.55" text-anchor="end" fill="#555">16</text><text x="751.5" y="604.33" text-anchor="end" fill="#555">18</text><text x="751.5" y="589.10" text-anchor="end" fill="#555">20</text><text x="764.30" y="751.500" text-anchor="middle" fill="#666">00h</text><text x="779.48" y="751.500" text-anchor="middle" fill="#666">01h</text><text x="794.66" y="751.500" text-anchor="middle" fill="#666">02h</text><text x="809.84" y="751.500" text-anchor="middle" fill="#666">03h</text><text x="825.02" y="751.500" text-anchor="middle" fill="#666">04h</text><text x="840.20" y="751.500" text-anchor="middle" fill="#666">05h</text><text x="855.38" y="751.500" text-anchor="middle" fill="#666">06h</text><text x="870.56" y="751.500" text-anchor="middle" fill="#666">07h</text><text x="885.74" y="751.500" text-anchor="middle" fill="#666">08h</text><text x="900.92" y="751.500" text-anchor="middle" fill="#666">09h</text><text x="916.10" y="751.500" text-anchor="middle" fill="#666">10h</text><text x="931.28" y="751.500" text-anchor="middle" fill="#666">11h</text><rect x="759.70" y="616.95" width="9.200" height="121.80" fill="#0000e6" stroke="#00008c" stroke-width=".6"/><text x="764.30" y="614.45" text-anchor="middle" fill="#222" font-size="8">16</text><rect x="774.88" y="700.69" width="9.200" height="38.06" fill="#0000e6" stroke="#00008c" stroke-width=".6"/><text x="779.48" y="698.19" text-anchor="middle" fill="#222" font-size="8">5</text><rect x="790.06" y="737.55" width="9.200" height="1.400" fill="#11114a"/><text x="794.66" y="736.25" text-anchor="middle" fill="#222" font-size="8">0</text><rect x="805.24" y="737.55" width="9.200" height="1.400" fill="#11114a"/><text x="809.84" y="736.25" text-anchor="middle" fill="#222" font-size="8">0</text><rect x="820.42" y="737.55" width="9.200" height="1.400" fill="#11114a"/><text x="825.02" y="736.25" text-anchor="middle" fill="#222" font-size="8">0</text><rect x="835.60" y="731.14" width="9.200" height="7.61" fill="#0000e6" stroke="#00008c" stroke-width=".6"/><text x="840.20" y="728.64" text-anchor="middle" fill="#222" font-size="8">1</text><rect x="850.78" y="731.14" width="9.200" height="7.61" fill="#0000e6" stroke="#00008c" stroke-width=".6"/><text x="855.38" y="728.64" text-anchor="middle" fill="#222" font-size="8">1</text><rect x="865.96" y="731.14" width="9.200" height="7.61" fill="#0000e6" stroke="#00008c" stroke-width=".6"/><text x="870.56" y="728.64" text-anchor="middle" fill="#222" font-size="8">1</text><rect x="881.14" y="731.14" width="9.200" height="7.61" fill="#0000e6" stroke="#00008c" stroke-width=".6"/><text x="885.74" y="728.64" text-anchor="middle" fill="#222" font-size="8">1</text><rect x="896.32" y="737.55" width="9.200" height="1.400" fill="#11114a"/><text x="900.92" y="736.25" text-anchor="middle" fill="#222" font-size="8">0</text><rect x="911.50" y="639.79" width="9.200" height="98.96" fill="#0000e6" stroke="#00008c" stroke-width=".6"/><text x="916.10" y="637.29" text-anchor="middle" fill="#222" font-size="8">13</text><rect x="926.68" y="737.55" width="9.200" height="1.400" fill="#11114a"/><text x="931.28" y="736.25" text-anchor="middle" fill="#222" font-size="8">0</text><path d="M987.7 738.75H1172" stroke="#f3f3f3" stroke-width="1"/><path d="M987.7 723.52H1172" stroke="#f3f3f3" stroke-width="1"/><path d="M987.7 708.30H1172" stroke="#f3f3f3" stroke-width="1"/><path d="M987.7 693.08H1172" stroke="#f3f3f3" stroke-width="1"/><path d="M987.7 677.85H1172" stroke="#f3f3f3" stroke-width="1"/><path d="M987.7 662.62H1172" stroke="#f3f3f3" stroke-width="1"/><path d="M987.7 647.40H1172" stroke="#f3f3f3" stroke-width="1"/><path d="M987.7 632.17H1172" stroke="#f3f3f3" stroke-width="1"/><path d="M987.7 616.95H1172" stroke="#f3f3f3" stroke-width="1"/><path d="M987.7 601.73H1172" stroke="#f3f3f3" stroke-width="1"/><path d="M987.7 586.50H1172" stroke="#f3f3f3" stroke-width="1"/><path d="M995.60 586.5V738.75" stroke="#f3f3f3" stroke-width="1"/><path d="M1010.84 586.5V738.75" stroke="#f3f3f3" stroke-width="1"/><path d="M1026.08 586.5V738.75" stroke="#f3f3f3" stroke-width="1"/><path d="M1041.32 586.5V738.75" stroke="#f3f3f3" stroke-width="1"/><path d="M1056.56 586.5V738.75" stroke="#f3f3f3" stroke-width="1"/><path d="M1071.80 586.5V738.75" stroke="#f3f3f3" stroke-width="1"/><path d="M1087.04 586.5V738.75" stroke="#f3f3f3" stroke-width="1"/><path d="M1102.28 586.5V738.75" stroke="#f3f3f3" stroke-width="1"/><path d="M1117.52 586.5V738.75" stroke="#f3f3f3" stroke-width="1"/><path d="M1132.76 586.5V738.75" stroke="#f3f3f3" stroke-width="1"/><path d="M1148.00 586.5V738.75" stroke="#f3f3f3" stroke-width="1"/><path d="M1163.24 586.5V738.75" stroke="#f3f3f3" stroke-width="1"/><text x="983" y="741.35" text-anchor="end" fill="#555">0</text><text x="983" y="726.12" text-anchor="end" fill="#555">52</text><text x="983" y="710.90" text-anchor="end" fill="#555">104</text><text x="983" y="695.68" text-anchor="end" fill="#555">156</text><text x="983" y="680.45" text-anchor="end" fill="#555">208</text><text x="983" y="665.23" text-anchor="end" fill="#555">260</text><text x="983" y="650.00" text-anchor="end" fill="#555">312</text><text x="983" y="634.77" text-anchor="end" fill="#555">364</text><text x="983" y="619.55" text-anchor="end" fill="#555">416</text><text x="983" y="604.33" text-anchor="end" fill="#555">468</text><text x="983" y="589.10" text-anchor="end" fill="#555">520</text><text x="995.60" y="751.500" text-anchor="middle" fill="#666">00h</text><text x="1010.84" y="751.500" text-anchor="middle" fill="#666">01h</text><text x="1026.08" y="751.500" text-anchor="middle" fill="#666">02h</text><text x="1041.32" y="751.500" text-anchor="middle" fill="#666">03h</text><text x="1056.56" y="751.500" text-anchor="middle" fill="#666">04h</text><text x="1071.80" y="751.500" text-anchor="middle" fill="#666">05h</text><text x="1087.04" y="751.500" text-anchor="middle" fill="#666">06h</text><text x="1102.28" y="751.500" text-anchor="middle" fill="#666">07h</text><text x="1117.52" y="751.500" text-anchor="middle" fill="#666">08h</text><text x="1132.76" y="751.500" text-anchor="middle" fill="#666">09h</text><text x="1148.00" y="751.500" text-anchor="middle" fill="#666">10h</text><text x="1163.24" y="751.500" text-anchor="middle" fill="#666">11h</text><rect x="991.30" y="706.84" width="8.600" height="31.91" fill="#0b800b" stroke="#0a4f0a" stroke-width=".7"/><rect x="1006.54" y="718.37" width="8.600" height="20.38" fill="#0b800b" stroke="#0a4f0a" stroke-width=".7"/><rect x="1021.48" y="737.15" width="9.200" height="1.800" fill="#1c2a1c"/><rect x="1036.72" y="737.15" width="9.200" height="1.800" fill="#1c2a1c"/><rect x="1051.96" y="737.15" width="9.200" height="1.800" fill="#1c2a1c"/><rect x="1067.50" y="733.01" width="8.600" height="5.74" fill="#0b800b" stroke="#0a4f0a" stroke-width=".7"/><rect x="1082.74" y="733.01" width="8.600" height="5.74" fill="#0b800b" stroke="#0a4f0a" stroke-width=".7"/><rect x="1097.98" y="735.82" width="8.600" height="2.93" fill="#0b800b" stroke="#0a4f0a" stroke-width=".7"/><rect x="1113.22" y="735.82" width="8.600" height="2.93" fill="#0b800b" stroke="#0a4f0a" stroke-width=".7"/><rect x="1128.16" y="737.15" width="9.200" height="1.800" fill="#1c2a1c"/><rect x="1143.70" y="634.52" width="8.600" height="104.23" fill="#0b800b" stroke="#0a4f0a" stroke-width=".7"/><rect x="1158.64" y="737.15" width="9.200" height="1.800" fill="#1c2a1c"/></svg><div class="a" style="left:166px;top:347.6px;width:184.5px;height:17.6px;background:#fff;border:1px solid #d9d9d9;border-radius:2px"></div><div class="a" style="left:186.5px;top:347.6px;width:48.0px;height:17.6px;background:#e8e8e8;border:1px solid #d0d0d0"></div><div class="a" style="left:234.5px;top:347.6px;width:1px;height:17.6px;background:#d9d9d9"></div><div class="a" style="left:282.5px;top:347.6px;width:1px;height:17.6px;background:#d9d9d9"></div><div class="a" style="left:330.5px;top:347.6px;width:1px;height:17.6px;background:#d9d9d9"></div><div class="t b" style="left:186.5px;width:48.0px;text-align:center;top:353.1px;font-size:7.200px;color:#333">Hoje</div><div class="t b" style="left:234.5px;width:48.0px;text-align:center;top:353.1px;font-size:7.200px;color:#333">7 dias</div><div class="t b" style="left:282.5px;width:48.0px;text-align:center;top:353.1px;font-size:7.200px;color:#333">1 mês</div><svg class="a" style="left:172.75px;top:353.4px" width="7" height="6" viewBox="0 0 7 6"><path d="M3.500 0v6L0 3zM7 0v6L3.500 3z" fill="#222"/></svg><svg class="a" style="left:337.0px;top:353.4px" width="7" height="6" viewBox="0 0 7 6"><path d="M0 0v6l3.500-3zM3.500 0v6L7 3z" fill="#999"/></svg><div class="a" style="left:394px;top:347.6px;width:184.5px;height:17.6px;background:#fff;border:1px solid #d9d9d9;border-radius:2px"></div><div class="a" style="left:413.5px;top:347.6px;width:48.7px;height:17.6px;background:#e8e8e8;border:1px solid #d0d0d0"></div><div class="a" style="left:462.2px;top:347.6px;width:1px;height:17.6px;background:#d9d9d9"></div><div class="a" style="left:510.5px;top:347.6px;width:1px;height:17.6px;background:#d9d9d9"></div><div class="a" style="left:558.5px;top:347.6px;width:1px;height:17.6px;background:#d9d9d9"></div><div class="t b" style="left:413.5px;width:48.7px;text-align:center;top:353.1px;font-size:7.200px;color:#333">Hoje</div><div class="t b" style="left:462.2px;width:48.3px;text-align:center;top:353.1px;font-size:7.200px;color:#333">7 dias</div><div class="t b" style="left:510.5px;width:48.0px;text-align:center;top:353.1px;font-size:7.200px;color:#333">1 mês</div><svg class="a" style="left:400.25px;top:353.4px" width="7" height="6" viewBox="0 0 7 6"><path d="M3.500 0v6L0 3zM7 0v6L3.500 3z" fill="#222"/></svg><svg class="a" style="left:565.0px;top:353.4px" width="7" height="6" viewBox="0 0 7 6"><path d="M0 0v6l3.500-3zM3.500 0v6L7 3z" fill="#999"/></svg><div class="a" style="left:620.6px;top:347.6px;width:184.6px;height:17.6px;background:#fff;border:1px solid #d9d9d9;border-radius:2px"></div><div class="a" style="left:641.2px;top:347.6px;width:48.5px;height:17.6px;background:#e8e8e8;border:1px solid #d0d0d0"></div><div class="a" style="left:689.7px;top:347.6px;width:1px;height:17.6px;background:#d9d9d9"></div><div class="a" style="left:737.5px;top:347.6px;width:1px;height:17.6px;background:#d9d9d9"></div><div class="a" style="left:785.8px;top:347.6px;width:1px;height:17.6px;background:#d9d9d9"></div><div class="t b" style="left:641.2px;width:48.5px;text-align:center;top:353.1px;font-size:7.200px;color:#333">Hoje</div><div class="t b" style="left:689.7px;width:47.8px;text-align:center;top:353.1px;font-size:7.200px;color:#333">7 dias</div><div class="t b" style="left:737.5px;width:48.3px;text-align:center;top:353.1px;font-size:7.200px;color:#333">1 mês</div><svg class="a" style="left:627.4px;top:353.4px" width="7" height="6" viewBox="0 0 7 6"><path d="M3.500 0v6L0 3zM7 0v6L3.500 3z" fill="#222"/></svg><svg class="a" style="left:792.0px;top:353.4px" width="7" height="6" viewBox="0 0 7 6"><path d="M0 0v6l3.500-3zM3.500 0v6L7 3z" fill="#999"/></svg>
</div>
<!-- FOOTER -->
<div class="a" id="footer" style="left:0;top:788px;width:1200px;height:12px;background:#ff9a05"></div>

<div class="t b" style="left:2.500px;top:790.700px;font-size:6.400px;color:#4a2a00">© 2012 - 2016 -&nbsp;&nbsp; LISNET&nbsp;&nbsp; - Todos os direitos reservados - Lisnet</div>
<div class="t b" style="right:2.500px;top:790.700px;font-size:6.400px;color:#4a2a00">by z6© - v5.13</div>

</body></html>
